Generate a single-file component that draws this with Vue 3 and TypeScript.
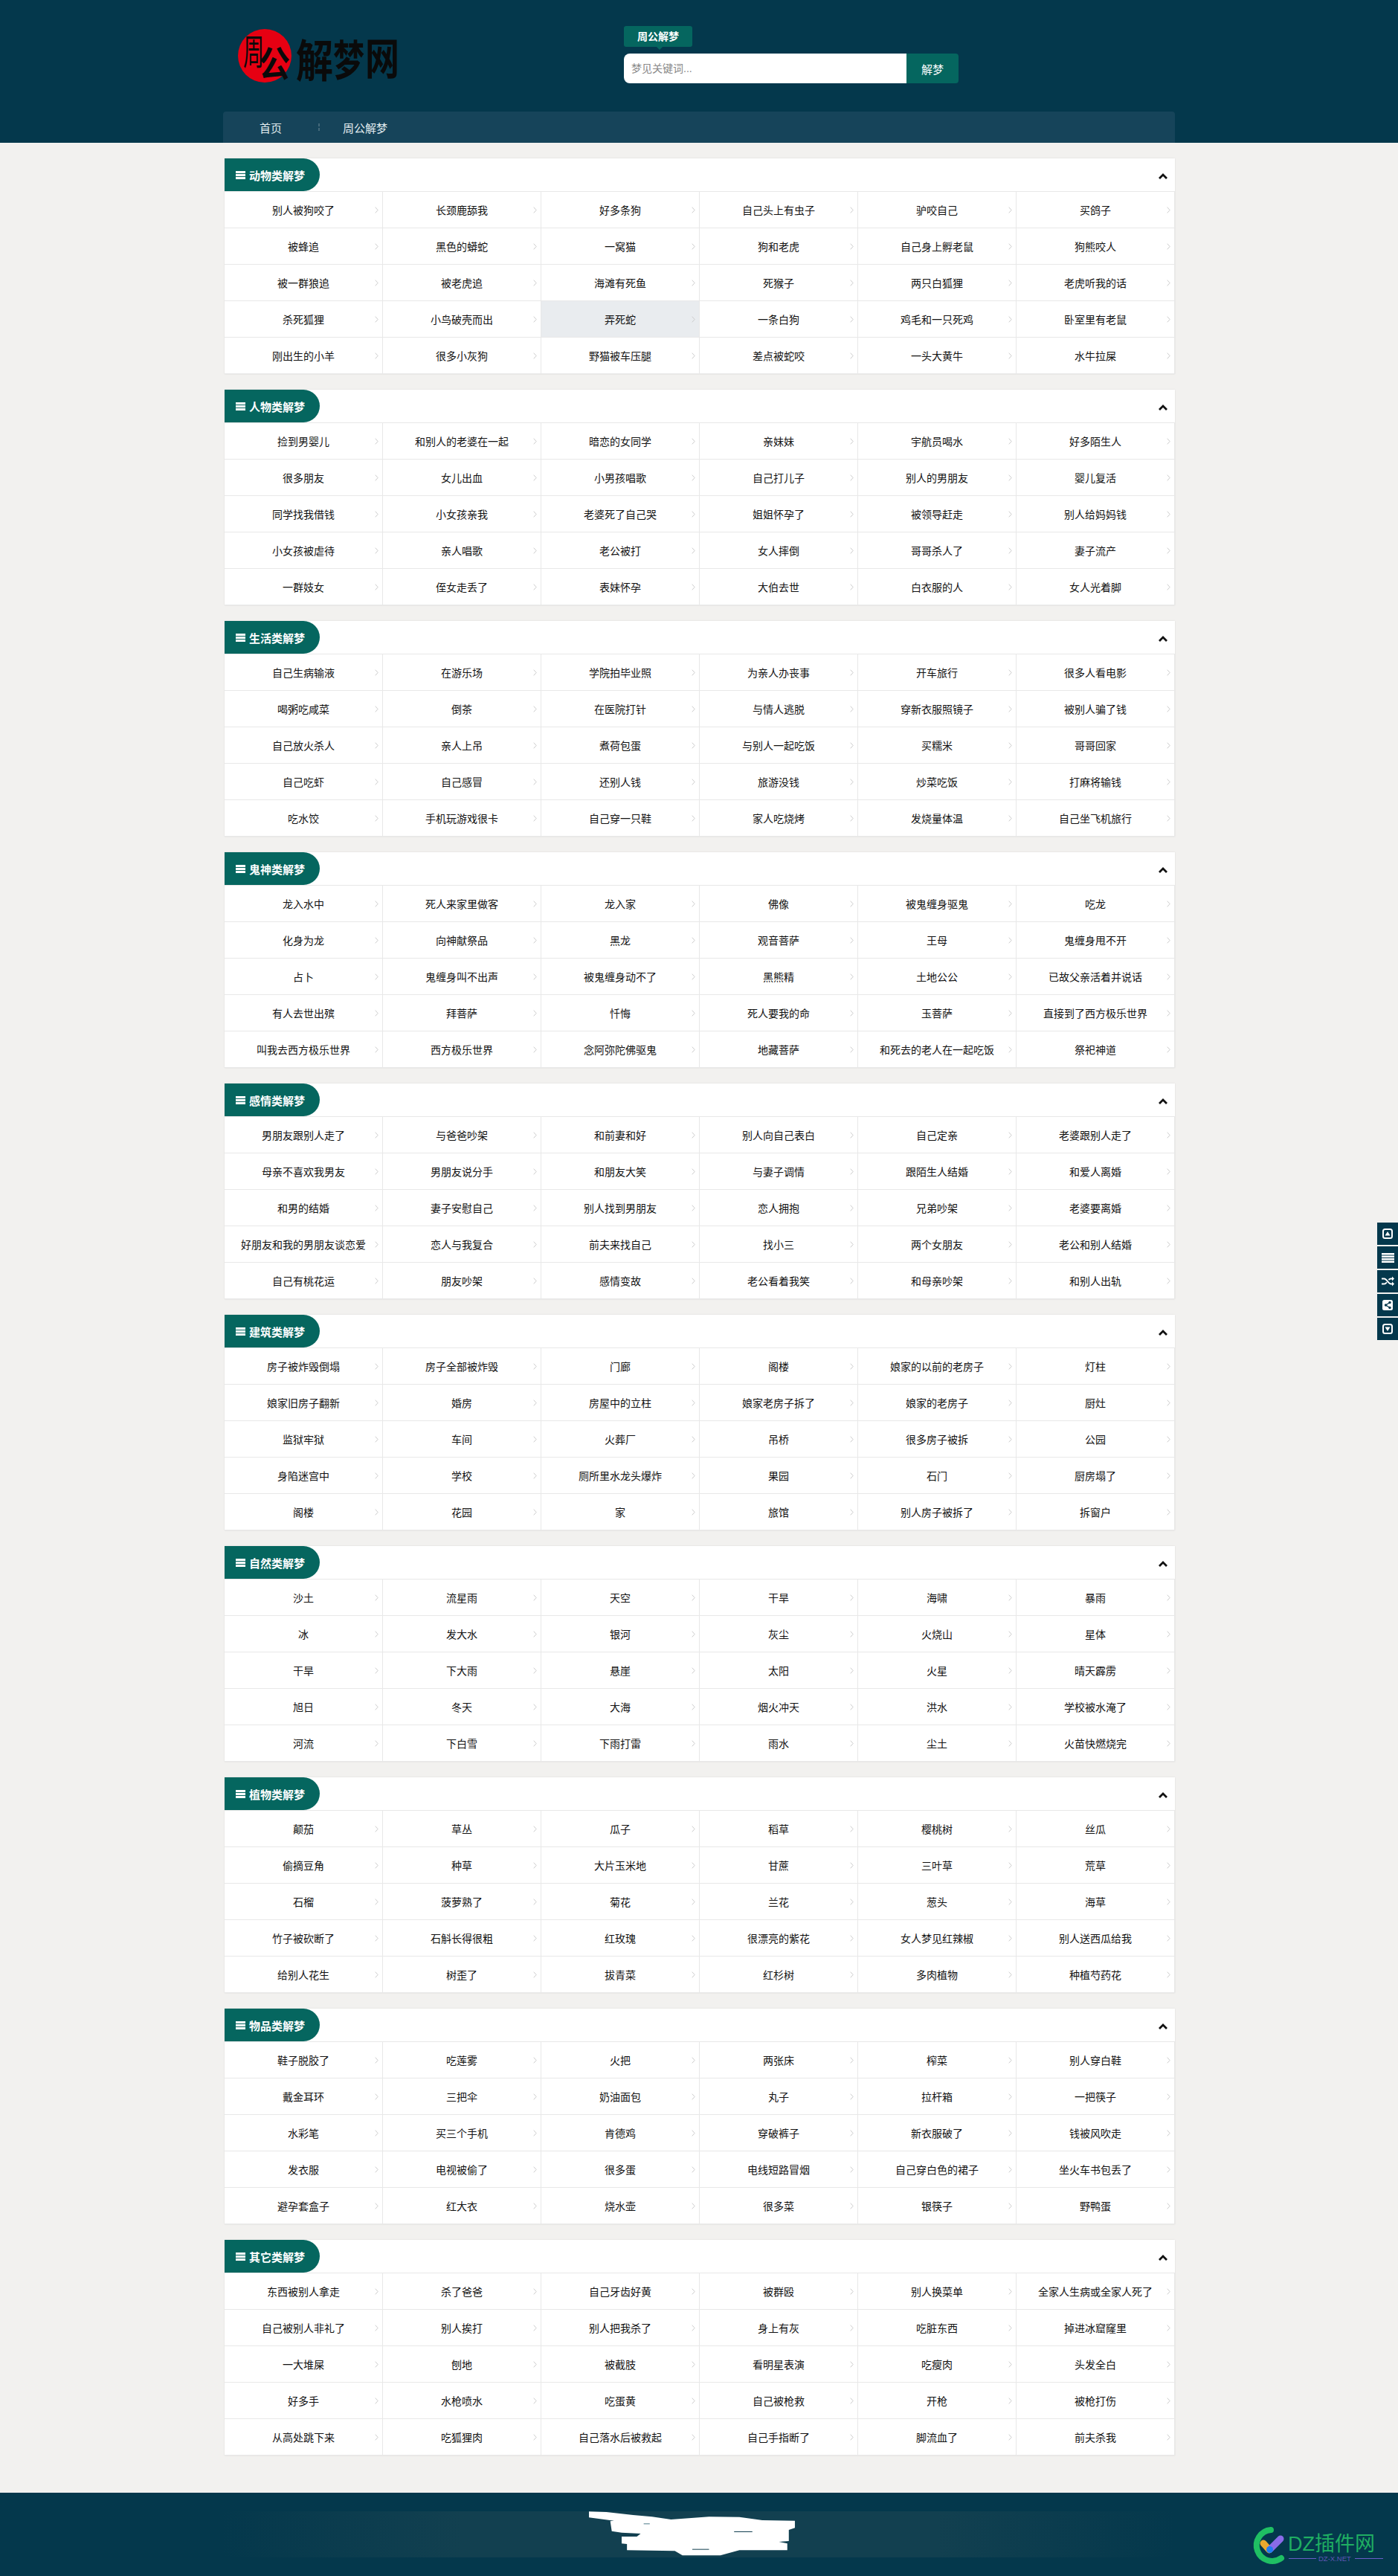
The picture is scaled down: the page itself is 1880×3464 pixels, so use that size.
<script setup lang="ts">
type Section = { title: string; items: string[] };

const raw: [string, string][] = [
  ['动物类解梦', '别人被狗咬了 长颈鹿舔我 好多条狗 自己头上有虫子 驴咬自己 买鸽子 被蜂追 黑色的蟒蛇 一窝猫 狗和老虎 自己身上孵老鼠 狗熊咬人 被一群狼追 被老虎追 海滩有死鱼 死猴子 两只白狐狸 老虎听我的话 杀死狐狸 小鸟破壳而出 弄死蛇 一条白狗 鸡毛和一只死鸡 卧室里有老鼠 刚出生的小羊 很多小灰狗 野猫被车压腿 差点被蛇咬 一头大黄牛 水牛拉屎'],
  ['人物类解梦', '捡到男婴儿 和别人的老婆在一起 暗恋的女同学 亲妹妹 宇航员喝水 好多陌生人 很多朋友 女儿出血 小男孩唱歌 自己打儿子 别人的男朋友 婴儿复活 同学找我借钱 小女孩亲我 老婆死了自己哭 姐姐怀孕了 被领导赶走 别人给妈妈钱 小女孩被虐待 亲人唱歌 老公被打 女人摔倒 哥哥杀人了 妻子流产 一群妓女 侄女走丢了 表妹怀孕 大伯去世 白衣服的人 女人光着脚'],
  ['生活类解梦', '自己生病输液 在游乐场 学院拍毕业照 为亲人办丧事 开车旅行 很多人看电影 喝粥吃咸菜 倒茶 在医院打针 与情人逃脱 穿新衣服照镜子 被别人骗了钱 自己放火杀人 亲人上吊 煮荷包蛋 与别人一起吃饭 买糯米 哥哥回家 自己吃虾 自己感冒 还别人钱 旅游没钱 炒菜吃饭 打麻将输钱 吃水饺 手机玩游戏很卡 自己穿一只鞋 家人吃烧烤 发烧量体温 自己坐飞机旅行'],
  ['鬼神类解梦', '龙入水中 死人来家里做客 龙入家 佛像 被鬼缠身驱鬼 吃龙 化身为龙 向神献祭品 黑龙 观音菩萨 王母 鬼缠身甩不开 占卜 鬼缠身叫不出声 被鬼缠身动不了 黑熊精 土地公公 已故父亲活着并说话 有人去世出殡 拜菩萨 忏悔 死人要我的命 玉菩萨 直接到了西方极乐世界 叫我去西方极乐世界 西方极乐世界 念阿弥陀佛驱鬼 地藏菩萨 和死去的老人在一起吃饭 祭祀神道'],
  ['感情类解梦', '男朋友跟别人走了 与爸爸吵架 和前妻和好 别人向自己表白 自己定亲 老婆跟别人走了 母亲不喜欢我男友 男朋友说分手 和朋友大笑 与妻子调情 跟陌生人结婚 和爱人离婚 和男的结婚 妻子安慰自己 别人找到男朋友 恋人拥抱 兄弟吵架 老婆要离婚 好朋友和我的男朋友谈恋爱 恋人与我复合 前夫来找自己 找小三 两个女朋友 老公和别人结婚 自己有桃花运 朋友吵架 感情变故 老公看着我笑 和母亲吵架 和别人出轨'],
  ['建筑类解梦', '房子被炸毁倒塌 房子全部被炸毁 门廊 阁楼 娘家的以前的老房子 灯柱 娘家旧房子翻新 婚房 房屋中的立柱 娘家老房子拆了 娘家的老房子 厨灶 监狱牢狱 车间 火葬厂 吊桥 很多房子被拆 公园 身陷迷宫中 学校 厕所里水龙头爆炸 果园 石门 厨房塌了 阁楼 花园 家 旅馆 别人房子被拆了 拆窗户'],
  ['自然类解梦', '沙土 流星雨 天空 干旱 海啸 暴雨 冰 发大水 银河 灰尘 火烧山 星体 干旱 下大雨 悬崖 太阳 火星 晴天霹雳 旭日 冬天 大海 烟火冲天 洪水 学校被水淹了 河流 下白雪 下雨打雷 雨水 尘土 火苗快燃烧完'],
  ['植物类解梦', '颠茄 草丛 瓜子 稻草 樱桃树 丝瓜 偷摘豆角 种草 大片玉米地 甘蔗 三叶草 荒草 石榴 菠萝熟了 菊花 兰花 葱头 海草 竹子被砍断了 石斛长得很粗 红玫瑰 很漂亮的紫花 女人梦见红辣椒 别人送西瓜给我 给别人花生 树歪了 拔青菜 红杉树 多肉植物 种植芍药花'],
  ['物品类解梦', '鞋子脱胶了 吃莲雾 火把 两张床 榨菜 别人穿白鞋 戴金耳环 三把伞 奶油面包 丸子 拉杆箱 一把筷子 水彩笔 买三个手机 肯德鸡 穿破裤子 新衣服破了 钱被风吹走 发衣服 电视被偷了 很多蛋 电线短路冒烟 自己穿白色的裙子 坐火车书包丢了 避孕套盒子 红大衣 烧水壶 很多菜 银筷子 野鸭蛋'],
  ['其它类解梦', '东西被别人拿走 杀了爸爸 自己牙齿好黄 被群殴 别人换菜单 全家人生病或全家人死了 自己被别人非礼了 别人挨打 别人把我杀了 身上有灰 吃脏东西 掉进冰窟窿里 一大堆屎 刨地 被截肢 看明星表演 吃瘦肉 头发全白 好多手 水枪喷水 吃蛋黄 自己被枪救 开枪 被枪打伤 从高处跳下来 吃狐狸肉 自己落水后被救起 自己手指断了 脚流血了 前夫杀我'],
];

const sections: Section[] = raw.map(([title, items]) => ({ title, items: items.split(' ') }));
</script>

<template>
  <div class="page">
    <header class="top">
      <div class="wrap">
        <div class="top-row">
          <svg class="logo" width="240" height="90" viewBox="0 0 240 90">
            <circle cx="46" cy="45" r="36" fill="#e60012" />
            <text font-size="28" class="thin" transform="translate(17 57) scale(1 1.7)">周</text>
            <text font-size="42" transform="translate(38 73) scale(1 1.15)">公</text>
            <text font-size="50" transform="translate(88 74) scale(1 1.2)">解</text>
            <text font-size="42" transform="translate(138 72) scale(1 1.35)">梦</text>
            <text font-size="46" transform="translate(181 70) scale(1 1.25)">网</text>
          </svg>
          <div class="search">
            <div class="tag">周公解梦</div>
            <form class="search-row" @submit.prevent>
              <input class="kw" type="text" placeholder="梦见关键词..." />
              <button class="go" type="submit">解梦</button>
            </form>
          </div>
        </div>
        <nav class="nav">
          <a class="nav-home">首页</a>
          <i class="nav-sep"></i>
          <a class="nav-cur">周公解梦</a>
        </nav>
      </div>
    </header>

    <main class="main">
      <section v-for="(s, si) in sections" :key="s.title" class="box">
        <div class="box-head">
          <h2 class="pill">
            <svg width="13" height="11" viewBox="0 0 13 11" fill="#fff">
              <rect width="13" height="3" />
              <rect y="4" width="13" height="3" />
              <rect y="8" width="13" height="3" />
            </svg>
            <span>{{ s.title }}</span>
          </h2>
          <svg class="fold" width="12" height="8" viewBox="0 0 12 8">
            <polyline points="1,7 6,2 11,7" fill="none" stroke="#111" stroke-width="2.8" />
          </svg>
        </div>
        <div class="grid">
          <a
            v-for="(t, i) in s.items"
            :key="i"
            class="cell"
            :class="{ on: si === 0 && i === 20 }"
          >
            {{ t }}
            <svg class="arrow" width="5" height="9" viewBox="0 0 5 9">
              <polyline points="0.7,0.7 4.2,4.5 0.7,8.3" fill="none" stroke="#ccc" stroke-width="1" />
            </svg>
          </a>
        </div>
      </section>
    </main>

    <footer class="foot">
      <div class="band">
        <svg class="blob" width="281" height="60" viewBox="500 530 275 180" preserveAspectRatio="none">
          <polygon
            fill="#fff"
            points="502,531 525,533 560,545 585,552 610,563 640,556 660,552 700,553 730,566 773,568 773,597 765,605 765,650 752,653 763,660 763,687 700,687 675,708 625,708 615,690 552,687 552,662 545,660 545,632 565,632 570,620 545,616 532,610 530,570 535,568 502,555"
          />
          <rect x="693" y="611" width="24" height="3" fill="#124050" />
          <rect x="638" y="682" width="22" height="3" fill="#124050" />
          <rect x="574" y="579" width="8" height="3" fill="#4d7a88" />
        </svg>
      </div>
      <svg class="mark" width="205" height="70" viewBox="0 0 205 70">
        <path d="M39 12 A21 21 0 1 0 53 50" fill="none" stroke="#1fbf63" stroke-width="8" stroke-linecap="round" />
        <line x1="29" y1="30" x2="37" y2="39" stroke="#e8a92e" stroke-width="9" stroke-linecap="round" />
        <line x1="38" y1="38" x2="52" y2="24" stroke="#8a6be8" stroke-width="9" stroke-linecap="round" />
        <circle cx="37.500" cy="38.500" r="4.500" fill="#1f7cf0" />
        <text x="62" y="40" class="mark-big">DZ插件网</text>
        <line x1="63" y1="50.500" x2="100" y2="50.500" stroke="#6a5cc8" />
        <text x="103" y="54" class="mark-small">DZ-X.NET</text>
        <line x1="152" y1="50.500" x2="190" y2="50.500" stroke="#6a5cc8" />
      </svg>
    </footer>

    <aside class="side">
      <a class="side-btn">
        <svg width="14" height="14" viewBox="0 0 14 14">
          <rect x="1" y="1" width="12" height="12" rx="2.500" fill="none" stroke="#fff" stroke-width="2" />
          <polygon points="7,4 10.500,9.500 3.500,9.500" fill="#fff" />
        </svg>
      </a>
      <a class="side-btn">
        <svg width="17" height="13" viewBox="0 0 17 13" fill="#fff">
          <rect width="17" height="2.500" />
          <rect y="3.500" width="17" height="2.500" />
          <rect y="7" width="17" height="2.500" />
          <rect y="10.500" width="17" height="2.500" />
        </svg>
      </a>
      <a class="side-btn">
        <svg width="17" height="14" viewBox="0 0 17 14">
          <path d="M0 3.500h3.500c3.500 0 5.500 7 9 7H15M0 10.500h3.500c1.400 0 2.500-1 3.400-2.300M9.400 5c.9-.9 1.900-1.500 3.100-1.500H15" fill="none" stroke="#fff" stroke-width="2" />
          <polygon points="14,0.500 17,3.500 14,6.500" fill="#fff" />
          <polygon points="14,7.500 17,10.500 14,13.500" fill="#fff" />
        </svg>
      </a>
      <a class="side-btn">
        <svg width="14" height="14" viewBox="0 0 14 14">
          <rect width="14" height="14" rx="2.500" fill="#fff" />
          <path d="M10 3.500 4.500 7 10 10.500" fill="none" stroke="#04384c" stroke-width="1.300" />
          <circle cx="10" cy="3.500" r="1.700" fill="#04384c" />
          <circle cx="4.500" cy="7" r="1.700" fill="#04384c" />
          <circle cx="10" cy="10.500" r="1.700" fill="#04384c" />
        </svg>
      </a>
      <a class="side-btn">
        <svg width="14" height="14" viewBox="0 0 14 14">
          <rect x="1" y="1" width="12" height="12" rx="2.500" fill="none" stroke="#fff" stroke-width="2" />
          <polygon points="3.500,4.500 10.500,4.500 7,10" fill="#fff" />
        </svg>
      </a>
    </aside>
  </div>
</template>

<style scoped>
.page {
  position: relative;
  font-family: "Liberation Sans", "Noto Sans CJK SC", sans-serif;
  color: #111;
}

.top {
  height: 192px;
  background: #04384c;
}

.wrap {
  width: 1280px;
  height: 192px;
  margin: 0 auto;
  display: flex;
  flex-direction: column;
  justify-content: space-between;
}

.top-row {
  display: flex;
}

.logo {
  margin: 30px 0 0 10px;
}

.logo text {
  font-family: "Noto Sans CJK SC", sans-serif;
  font-weight: 700;
  fill: #0a0a0a;
}

.logo text.thin {
  font-weight: 400;
}

.search {
  margin: 35px 0 0 289px;
}

.tag {
  position: relative;
  width: 92px;
  height: 28px;
  line-height: 28px;
  margin-bottom: 9px;
  background: #05665f;
  border-radius: 3px;
  color: #fff;
  font-size: 14px;
  font-weight: 700;
  text-align: center;
}

.tag::after {
  content: "";
  position: absolute;
  left: 44px;
  top: 28px;
  border: 4px solid transparent;
  border-top-color: #05665f;
}

.search-row {
  display: flex;
  margin: 0;
}

.kw {
  width: 380px;
  height: 40px;
  box-sizing: border-box;
  padding: 0 10px;
  border: 0;
  outline: 0;
  border-radius: 8px 0 0 8px;
  background: #fff;
  font-family: inherit;
  font-size: 14px;
}

.kw::placeholder {
  color: #888;
}

.go {
  width: 70px;
  height: 40px;
  border: 0;
  border-radius: 0 4px 4px 0;
  background: #05665f;
  color: #fff;
  font-family: inherit;
  font-size: 15px;
}

.nav {
  height: 42px;
  display: flex;
  align-items: center;
  background: #16445a;
  border-radius: 4px 4px 0 0;
  color: #e3edf0;
  font-size: 15px;
}

.nav-home {
  margin-left: 49px;
}

.nav-sep {
  width: 2px;
  height: 11px;
  margin: 0 31px 0 49px;
  background: repeating-linear-gradient(180deg, #44697a 0 4px, transparent 4px 6px);
}

.main {
  padding: 21px 0 29px;
  background: #f2f1ef;
}

.box {
  width: 1278px;
  margin: 0 0 21px 302px;
  background: #fff;
  box-shadow: 0 0 2px rgba(0, 0, 0, 0.1);
}

.box-head {
  height: 44px;
  display: flex;
  align-items: center;
  justify-content: space-between;
  border-bottom: 1px solid #e8e8e8;
}

.pill {
  width: 128px;
  height: 44px;
  box-sizing: border-box;
  margin: 0;
  padding-left: 15px;
  display: flex;
  align-items: center;
  gap: 5px;
  background: #05665f;
  border-radius: 0 22px 22px 0;
  color: #fff;
  font-size: 15px;
  font-weight: 700;
}

.fold {
  margin: 4px 10px 0 0;
}

.grid {
  display: grid;
  grid-template-columns: repeat(6, 213px);
}

.cell {
  position: relative;
  height: 49px;
  box-sizing: border-box;
  display: flex;
  align-items: center;
  justify-content: center;
  border-right: 1px solid #e8e8e8;
  border-bottom: 1px solid #e8e8e8;
  font-size: 14px;
  color: #111;
}

.cell.on {
  background: #e9ecef;
}

.arrow {
  position: absolute;
  right: 5px;
  top: 20px;
}

.foot {
  position: relative;
  height: 112px;
  padding-top: 25px;
  box-sizing: border-box;
  background: #04384c;
}

.band {
  position: relative;
  width: 1280px;
  height: 62px;
  margin: 0 auto;
  background: linear-gradient(90deg, transparent, #124050 25%, #124050 75%, transparent);
}

.blob {
  position: absolute;
  left: 490px;
  top: 0;
}

.mark {
  position: absolute;
  left: 1670px;
  top: 38px;
}

.mark-big {
  font-family: "Liberation Sans", "Noto Sans CJK SC", sans-serif;
  font-size: 27px;
  fill: #1fae62;
}

.mark-small {
  font-family: "Liberation Sans", sans-serif;
  font-size: 9.500px;
  fill: #5f55b5;
}

.side {
  position: fixed;
  right: 0;
  top: 50%;
  margin-top: -88px;
  display: flex;
  flex-direction: column;
  gap: 2px;
}

.side-btn {
  width: 28px;
  height: 30px;
  display: flex;
  align-items: center;
  justify-content: center;
  background: #04384c;
}
</style>

<style>
html,
body {
  margin: 0;
  background: #f2f1ef;
}
</style>
